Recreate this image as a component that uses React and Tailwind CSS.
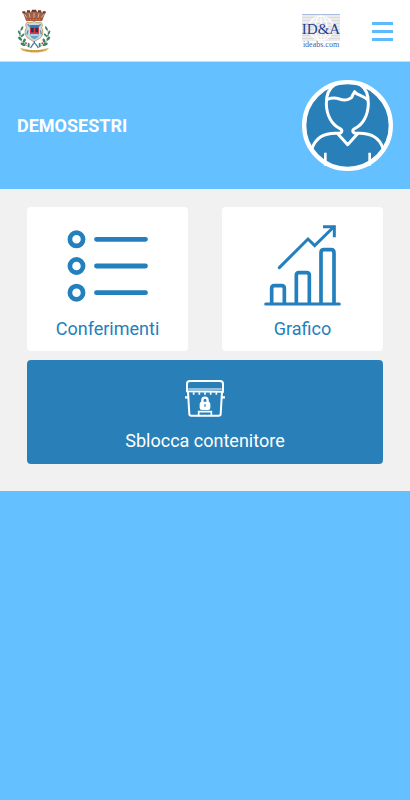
import React from 'react';

const CityCrest = () => (
  <svg viewBox="24 26 99 132" className="w-[33px] h-11" role="img" aria-label="Stemma comunale">
    {/* Crown */}
    <path d="M38 34l10 3 4-5 9 4 5-6h13l5 6 9-4 4 5 10-3-10 27H48z" fill="#9a6248" />
    <path d="M37 33h9v6h-9zM51 30h9v6h-9zM66 28h12v6H66zM84 30h9v6h-9zM98 33h9v6h-9z" fill="#71352d" />
    <path d="M44 42l7 10M57 39l3 13M72 38v14M87 39l-3 13M101 42l-7 10" stroke="#e0ae88" strokeWidth="3" />
    <path d="M48 54h48v7H48z" fill="#a9472d" />
    <path d="M50 57h45" stroke="#e9b35a" strokeWidth="2" strokeDasharray="5 4" />
    {/* Wreath */}
    <path d="M37 80c-16 25-7 49 27 63" fill="none" stroke="#6f8b76" strokeWidth="2" />
    <path d="M108 80c16 25 7 49-27 63" fill="none" stroke="#6f8b76" strokeWidth="2" />
    <g fill="#3e8060">
      <ellipse cx="36" cy="84" rx="3" ry="7" transform="rotate(25 36 84)" />
      <ellipse cx="28" cy="97" rx="3" ry="7" transform="rotate(-25 28 97)" />
      <ellipse cx="38" cy="105" rx="3" ry="7" transform="rotate(45 38 105)" />
      <ellipse cx="30" cy="115" rx="4" ry="7" transform="rotate(-45 30 115)" />
      <ellipse cx="43" cy="121" rx="4" ry="7" transform="rotate(20 43 121)" />
      <ellipse cx="39" cy="132" rx="4" ry="8" transform="rotate(-65 39 132)" />
      <ellipse cx="56" cy="134" rx="3" ry="7" />
      <ellipse cx="109" cy="84" rx="3" ry="7" transform="rotate(-25 109 84)" />
      <ellipse cx="117" cy="97" rx="3" ry="7" transform="rotate(25 117 97)" />
      <ellipse cx="107" cy="105" rx="3" ry="7" transform="rotate(-45 107 105)" />
      <ellipse cx="115" cy="115" rx="4" ry="7" transform="rotate(45 115 115)" />
      <ellipse cx="102" cy="121" rx="4" ry="7" transform="rotate(-20 102 121)" />
      <ellipse cx="106" cy="132" rx="4" ry="8" transform="rotate(65 106 132)" />
      <ellipse cx="89" cy="134" rx="3" ry="7" />
    </g>
    <g fill="#b64b42">
      <circle cx="33" cy="105" r="2" />
      <circle cx="48" cy="129" r="3" />
      <circle cx="112" cy="105" r="2" />
      <circle cx="97" cy="129" r="3" />
    </g>
    {/* Shield with its scroll frame */}
    <path d="M52 65c-7 7-6 13-2 17-7 8-5 22 1 29 6 6 14 7 21 14 7-7 15-8 21-14 6-7 8-21 1-29 4-4 5-10-2-17-8 4-13 2-20-2-7 4-12 6-20 2z" fill="#c3dbe6" stroke="#c5a35b" strokeWidth="3" />
    <path d="M53 72l8 8M92 72l-8 8M54 90l-3 12M91 90l3 12" stroke="#5c8fbd" strokeWidth="4" />
    <path d="M60 74h27v28H60z" fill="#3f78b3" />
    <path d="M60 83h27v16H60z" fill="#d5393c" />
    <path d="M63 82h8v14h-8zM76 82h8v14h-8z" fill="#20345c" />
    <path d="M60 101h27c-1 9-6 13-14 16-7-3-12-7-13-16z" fill="#6ea2cc" />
    <path d="M62 104h23" stroke="#eef9fb" strokeWidth="3" />
    <path d="M73 122v8M71 129l-9 13M75 129l10 13" fill="none" stroke="#537ba7" strokeWidth="4" />
    {/* Ribbon */}
    <path d="M30 143l12 2c16 5 47 5 63 0l12-2-8 8c-20 7-50 7-71 0z" fill="#dfae4d" />
    <path d="M48 150c17 3 36 3 51 0" fill="none" stroke="#8a6c3c" strokeWidth="2" strokeDasharray="3 2" />
  </svg>
);

const IdeaLogo = () => (
  <svg viewBox="0 0 39 35" className="w-[39px] h-[35px]" role="img" aria-label="ID&A ideabs.com">
    <rect width="38" height="27" fill="#ebebed" />
    <path d="M0 3.5h38M0 6.5h38M0 9.5h38M0 12.5h38M0 15.5h38M0 18.5h38M0 21.5h38M0 24.5h38" stroke="#dbdbde" strokeWidth="1" />
    <path d="M0 .5h38" stroke="#a9bbdf" />
    <g fill="none" stroke="#fff" strokeWidth="1.2">
      <circle cx="19" cy="14" r="12" />
      <ellipse cx="19" cy="14" rx="6" ry="12" />
      <path d="M19 2v24M9 7h20M9 22h20" />
    </g>
    <text x="19" y="20" textAnchor="middle" fontSize="15" fill="#1c3f92" fontFamily="'Liberation Serif', serif">ID&amp;A</text>
    <text x="19" y="33" textAnchor="middle" fontSize="8" fill="#3f5fa8" fontFamily="'Liberation Serif', serif">ideabs.com</text>
  </svg>
);

const MenuIcon = () => (
  <svg viewBox="0 0 21 19" className="w-[21px] h-[19px]" fill="#5dbaff" aria-hidden="true">
    <rect width="21" height="3" />
    <rect y="8" width="21" height="3" />
    <rect y="16" width="21" height="3" />
  </svg>
);

const Avatar = () => (
  <svg viewBox="36 28 273 273" className="w-[91px] h-[91px]" role="img" aria-label="Profilo">
    <circle cx="172.5" cy="164.5" r="130" fill="#2980b9" stroke="#fff" strokeWidth="13" />
    <g fill="none" stroke="#fff" strokeWidth="9" strokeLinejoin="round">
      <path d="M134 42c-18 12-26 32-25 58 1 34 16 62 40 73 10 5 8 14-2 15-44-3-70 12-81 46" />
      <path d="M211 42c18 12 25 32 24 58-1 34-16 62-40 73-10 5-8 14 2 15 45-3 72 12 82 46" />
      <path d="M142 188l31 34 31-34" />
      <path d="M112 86c11-4 24-5 36-1 20 7 38 0 40-12l6-10c4 10 19 8 40 25" />
      <path d="M106 246v39M239 246v39" strokeWidth="8" />
    </g>
  </svg>
);

const ListIcon = () => (
  <svg viewBox="0 0 81 72" className="w-[81px] h-[72px]" fill="none" stroke="#2380bc" aria-hidden="true">
    <g strokeWidth="4.7">
      <circle cx="9.5" cy="9.3" r="6.6" />
      <circle cx="9.5" cy="36" r="6.6" />
      <circle cx="9.5" cy="62.7" r="6.6" />
    </g>
    <path d="M29.5 9.3h49M29.5 36h49M29.5 62.7h49" strokeWidth="4.8" strokeLinecap="round" />
  </svg>
);

const ChartIcon = () => (
  <svg viewBox="147 75 231 243" className="w-[77px] h-[81px]" fill="none" stroke="#2380bc" aria-hidden="true">
    <g strokeWidth="11">
      <path d="M170 311v-46q0-8 8-8h22q8 0 8 8v46" />
      <path d="M244 311v-85q0-8 8-8h23q8 0 8 8v85" />
      <path d="M318 311V158q0-9 9-9h21q9 0 9 9v153" />
    </g>
    <path d="M152 312h221" strokeWidth="9" strokeLinecap="round" />
    <path d="M193 203l86-86 20 20 57-56" strokeWidth="9" strokeLinecap="round" />
    <path d="M324 80h34v32" strokeWidth="9" />
  </svg>
);

const BinIcon = () => (
  <svg viewBox="225 74 120 111" className="w-10 h-[37px]" fill="none" stroke="#fff" aria-hidden="true">
    <path d="M231 108V85q0-8 9-8h90q9 0 9 8v24z" strokeWidth="6" />
    <path d="M235 101h100" strokeWidth="3" />
    <path d="M234 110l4 66q0 5 6 5h82q6 0 6-5l4-66" strokeWidth="6" />
    <path d="M225 126h9M336 126h9" strokeWidth="7" />
    <path d="M251 111v7M268 111v7M285 111v7M302 111v7M319 111v7" strokeWidth="5" />
    <path d="M266 183v-17M304 183v-17M266 169h38" strokeWidth="5" />
    {/* Lock */}
    <path d="M277 142v-6q0-9 8-9t8 9v6" strokeWidth="7" />
    <rect x="269" y="139" width="32" height="25" rx="7" fill="#fff" stroke="none" />
    <path d="M285 147v7" stroke="#2980b9" strokeWidth="4" />
  </svg>
);

const tiles = [
  { label: 'Conferimenti', icon: ListIcon },
  { label: 'Grafico', icon: ChartIcon },
];

const App = () => {
  return (
    <div className="min-h-screen bg-[#64c0ff] font-['Roboto',sans-serif]">
      <header className="flex items-center justify-between border-b border-[#bfdfff] bg-white pt-[9px] pb-2 pl-[18px] pr-[17px]">
        <CityCrest />
        <div className="flex items-center gap-[31px]">
          <IdeaLogo />
          <button type="button" aria-label="Menu" className="cursor-pointer">
            <MenuIcon />
          </button>
        </div>
      </header>

      <section className="flex items-center justify-between py-[18px] px-[17px]">
        <h1 className="text-lg font-bold text-white">DEMOSESTRI</h1>
        <Avatar />
      </section>

      <main className="bg-[#f1f1f1] px-[27px] pt-[18px] pb-[27px]">
        <div className="grid grid-cols-2 gap-x-[34px]">
          {tiles.map(({ label, icon: Icon }) => (
            <button key={label} type="button"
              className="flex flex-col items-center gap-[9px] rounded bg-white pt-[18px] pb-2 text-lg text-[#2380bc] cursor-pointer">
              <span className="flex h-[81px] items-center">
                <Icon />
              </span>
              {label}
            </button>
          ))}
        </div>

        <button type="button"
          className="mt-[9px] flex w-full flex-col items-center gap-[10px] rounded bg-[#2980b9] pt-5 pb-[9px] text-lg text-white cursor-pointer">
          <BinIcon />
          Sblocca contenitore
        </button>
      </main>
    </div>
  );
};

export default App;
